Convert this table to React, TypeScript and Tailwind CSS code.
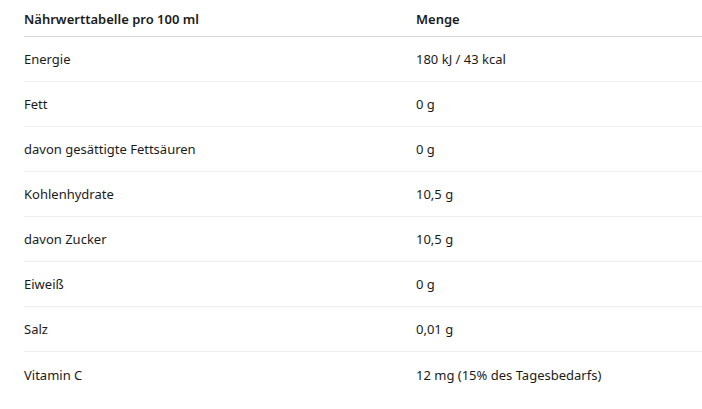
export default function App() {
  const rows: [string, string][] = [
    ["Energie", "180 kJ / 43 kcal"],
    ["Fett", "0 g"],
    ["davon gesättigte Fettsäuren", "0 g"],
    ["Kohlenhydrate", "10,5 g"],
    ["davon Zucker", "10,5 g"],
    ["Eiweiß", "0 g"],
    ["Salz", "0,01 g"],
    ["Vitamin C", "12 mg (15% des Tagesbedarfs)"],
  ];
  return (
    <div className="w-[702px] h-[409px] bg-white pl-6 text-[13px] text-[#1b1b1b] overflow-hidden" style={{ fontFamily: '"Noto Sans", sans-serif' }}>
      <div className="flex h-[37px] items-center pt-[4px] border-b border-[#d6d6d6] font-semibold">
        <div className="w-[392px]">Nährwerttabelle pro 100 ml</div>
        <div>Menge</div>
      </div>
      {rows.map(([a, b], i) => (
        <div key={i} className={`flex h-[45px] items-center pt-[2px] ${i < rows.length - 1 ? "border-b border-[#eeeeee]" : ""}`}>
          <div className="w-[392px]">{a}</div>
          <div>{b}</div>
        </div>
      ))}
    </div>
  );
}
